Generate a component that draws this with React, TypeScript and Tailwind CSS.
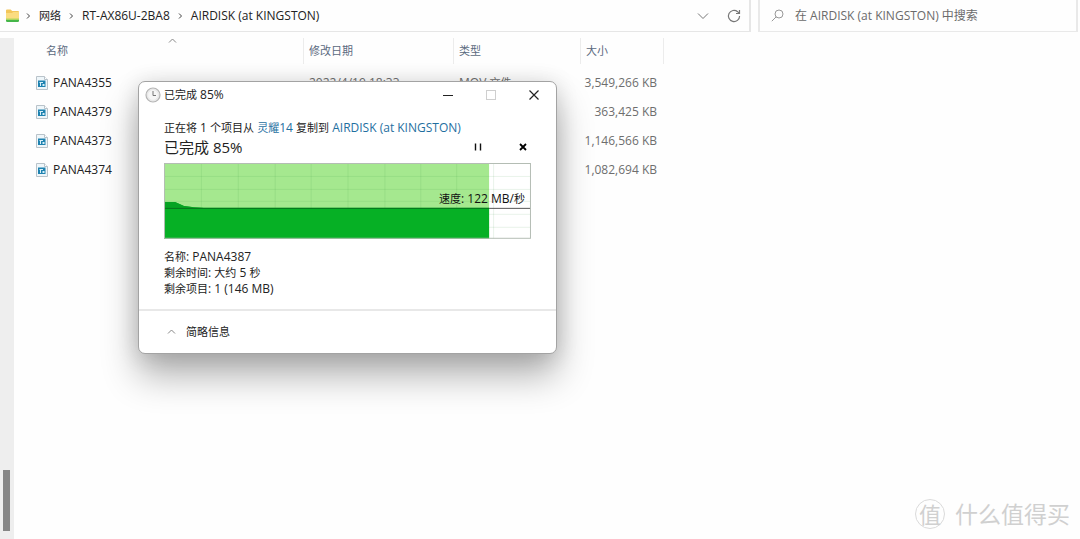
import { useState } from "react";
import type { ReactNode } from "react";

type FileRow = {
	name: string;
	date?: string;
	type?: ReactNode;
	size: string;
};

// Chinese glyphs are set one size below the latin text around them
const Zh = ({ children }: { children: ReactNode }) => (
	<span className="text-[11px]">{children}</span>
);

const files: FileRow[] = [
	{
		name: "PANA4355",
		date: "2022/4/19 18:33",
		type: (
			<>
				MOV <Zh>文件</Zh>
			</>
		),
		size: "3,549,266 KB",
	},
	{ name: "PANA4379", size: "363,425 KB" },
	{ name: "PANA4373", size: "1,146,566 KB" },
	{ name: "PANA4374", size: "1,082,694 KB" },
];

const FolderIcon = () => (
	<svg width="16" height="16" viewBox="0 0 16 16" className="shrink-0">
		<path d="M1 2.500q0-1 1-1h3.600l1.600 1.600H13q1 0 1 1V12H1z" fill="#f3c65a" />
		<path d="M1 5h6l1.200-1H14v8H1z" fill="#fbdc80" />
		<path d="M1 11.500h13v1.200q0 1.300-1.300 1.300H2.300Q1 14 1 12.700z" fill="#45b649" />
		<path d="M1 10.500h13v1.200H1z" fill="#b5d95c" />
	</svg>
);

const VideoFileIcon = () => (
	<svg width="12" height="14" viewBox="0 0 12 14" className="shrink-0">
		<path d="M.5.5h8l3 3v10H.5z" fill="#eef6fa" stroke="#b9c3ca" />
		<path d="M8.500.5v3h3" fill="#fff" stroke="#b9c3ca" />
		<rect x="2" y="4.500" width="7.500" height="6.500" fill="#1e82b0" />
		<path d="M3.500 6h3.500v1H5v3H4V7h-.5zM6.500 8H8.500v2H6.500z" fill="#d8eff8" />
	</svg>
);

const ClockIcon = () => (
	<svg width="16" height="16" viewBox="0 0 16 16" className="shrink-0">
		<circle cx="8" cy="8" r="7" fill="#ececec" stroke="#b4b4b4" strokeWidth="1.200" />
		<circle cx="8" cy="8" r="5.400" fill="#f6f6f6" stroke="#e0e0e0" strokeWidth=".6" />
		<path d="M8 4v4.500h3" fill="none" stroke="#777" />
	</svg>
);

const Chevron = () => (
	<svg width="5" height="8" viewBox="0 0 5 8" fill="none" stroke="#444" className="shrink-0">
		<path d="M1 1.500l2.500 2.500L1 6.500" />
	</svg>
);

const CaretUp = ({ className = "" }: { className?: string }) => (
	<svg
		width="9"
		height="6"
		viewBox="0 0 9 6"
		fill="none"
		stroke="#888"
		className={className}
	>
		<path d="M1 4.500l3.500-3.500L8 4.500" />
	</svg>
);

const AddressBar = () => (
	<header className="flex h-8 gap-[7px] pr-[2px]">
		<div className="flex min-w-0 flex-1 items-center border-r-2 border-b border-[#e6e6e6] pr-[6px] pl-[5px]">
			<FolderIcon />
			<nav
				aria-label="路径"
				className="ml-[5px] flex items-center gap-[8px] whitespace-nowrap text-[#222]"
			>
				<Chevron />
				<a href="#network">
					<Zh>网络</Zh>
				</a>
				<Chevron />
				<a href="#router">RT-AX86U-2BA8</a>
				<Chevron />
				<a href="#airdisk">AIRDISK (at KINGSTON)</a>
			</nav>
			<button type="button" aria-label="历史记录" className="ml-auto p-1">
				<svg width="12" height="8" viewBox="0 0 12 8" fill="none" stroke="#777">
					<path d="M1 1.500l5 5 5-5" />
				</svg>
			</button>
			<button type="button" aria-label="刷新" className="ml-[12px] p-[2px]">
				<svg
					width="14"
					height="14"
					viewBox="0 0 14 14"
					fill="none"
					stroke="#777"
					strokeWidth="1.200"
				>
					<path d="M12.600 7A5.600 5.600 0 1 1 10.600 2.700L12.300 4.400" />
					<path d="M12.500 1v3.500H9" />
				</svg>
			</button>
		</div>
		<label className="flex w-80 items-center gap-[11px] border-x-2 border-b border-[#e9e9e9] px-[11px]">
			<svg
				width="13"
				height="13"
				viewBox="0 0 13 13"
				fill="none"
				stroke="#999"
				className="shrink-0"
			>
				<circle cx="8" cy="5" r="4" />
				<path d="M5.200 7.800L.8 12.200" />
			</svg>
			<input
				type="search"
				aria-label="搜索"
				placeholder="在 AIRDISK (at KINGSTON) 中搜索"
				className="min-w-0 flex-1 bg-transparent outline-none placeholder:text-[#6b6b6b]"
			/>
		</label>
	</header>
);

const FileTable = () => (
	<table className="ml-[18px] w-[632px] table-fixed self-start">
		<thead className="text-[11px] text-[#5b6a80]">
			<tr className="h-[30px] text-left align-top">
				<th className="relative w-[272px] p-0 font-normal">
					<CaretUp className="absolute top-0 left-[136px]" />
					<div className="h-[26px] border-r border-[#ececec] pl-[14px] leading-[26px]">名称</div>
				</th>
				<th className="w-[150px] p-0 font-normal">
					<div className="h-[26px] border-r border-[#ececec] pl-[5px] leading-[26px]">
						修改日期
					</div>
				</th>
				<th className="w-[127px] p-0 font-normal">
					<div className="h-[26px] border-r border-[#ececec] pl-[5px] leading-[26px]">类型</div>
				</th>
				<th className="p-0 font-normal">
					<div className="h-[26px] border-r border-[#ececec] pl-[5px] leading-[26px]">大小</div>
				</th>
			</tr>
		</thead>
		<tbody>
			{files.map((f) => (
				<tr key={f.name} className="h-[29px] whitespace-nowrap text-[#6e6e6e]">
					<td className="p-0 pl-[4px]">
						<div className="flex items-center gap-[5px] text-[#222]">
							<VideoFileIcon />
							{f.name}
						</div>
					</td>
					<td className="p-0 pl-[5px]">{f.date}</td>
					<td className="p-0 pl-[5px]">{f.type}</td>
					<td className="p-0 pr-[7px] text-right">{f.size}</td>
				</tr>
			))}
		</tbody>
	</table>
);

const SpeedChart = () => (
	<div className="relative mt-[5px]">
		<svg viewBox="0 0 368 76" className="block w-full">
			<rect width="368" height="76" fill="#fff" />
			<rect width="326" height="76" fill="#a5e88f" />
			{/* grid */}
			<g stroke="#2b8a3a" strokeOpacity=".11">
				{[13, 26, 38, 51, 64].map((y) => (
					<path key={y} d={`M0 ${y + 0.5}H368`} />
				))}
				{[37, 74, 111, 147, 184, 221, 257, 293, 330].map((x) => (
					<path key={x} d={`M${x + 0.5} 0V76`} />
				))}
			</g>
			<path d="M0 39H11L20 43L30 44.500L40 45H326V76H0z" fill="#06b025" />
			<path d="M0 39H11L20 43L30 44.500L40 45H0z" fill="#06a323" />
			<path d="M0 45.500H326" stroke="#08701c" />
			<path d="M326 45.500H368" stroke="#555" />
			<rect x=".5" y=".5" width="367" height="75" fill="none" stroke="#b4bdb4" />
		</svg>
		<div className="absolute top-[28px] right-[6px] text-[#111]">
			<Zh>速度</Zh>: 122 MB/<Zh>秒</Zh>
		</div>
	</div>
);

const CopyDialog = () => {
	const [paused, setPaused] = useState(false);

	return (
		<section
			role="dialog"
			aria-label="已完成 85%"
			className="absolute top-[81px] left-[138px] w-[419px] rounded-[7px] border border-[#a3a3a3] bg-white text-[#222] shadow-[0_22px_36px_rgba(0,0,0,0.3),0_2px_22px_rgba(0,0,0,0.14)]"
		>
			<div className="flex h-[25px] items-center pr-[1px] pl-[6px]">
				<ClockIcon />
				<span className="ml-[3px]">
					<Zh>已完成</Zh> 85%
				</span>
				<button
					type="button"
					aria-label="最小化"
					className="ml-auto flex h-full w-[43px] items-center justify-center"
				>
					<svg width="10" height="10" stroke="#222">
						<path d="M0 5.500h10" />
					</svg>
				</button>
				<button
					type="button"
					aria-label="最大化"
					disabled
					className="flex h-full w-[43px] items-center justify-center"
				>
					<svg width="10" height="10" fill="none" stroke="#cfcfcf">
						<rect x=".5" y=".5" width="9" height="9" />
					</svg>
				</button>
				<button
					type="button"
					aria-label="关闭"
					className="flex h-full w-[43px] items-center justify-center"
				>
					<svg width="10" height="10" stroke="#222" strokeWidth="1.200">
						<path d="M.5.5l9 9M9.500.5l-9 9" />
					</svg>
				</button>
			</div>

			<div className="px-[25px] pt-[13px] pb-[12px]">
				<p className="whitespace-nowrap">
					<Zh>正在将</Zh> 1 <Zh>个项目从</Zh>{" "}
					<a href="#source" className="text-[#1f6f9f]">
						<Zh>灵耀</Zh>14
					</a>{" "}
					<Zh>复制到</Zh>{" "}
					<a href="#airdisk" className="text-[#1f6f9f]">
						AIRDISK (at KINGSTON)
					</a>
				</p>
				<div className="flex h-[22px] items-center">
					<h2 className="text-[15px] leading-5">已完成 85%</h2>
					<button
						type="button"
						aria-label="暂停"
						aria-pressed={paused}
						onClick={() => setPaused(!paused)}
						className="ml-auto flex size-4 items-center justify-center"
					>
						<svg width="8" height="8" fill="#111">
							<path d="M.8 .5h1.400v7H.8zM5.800.5h1.400v7H5.800z" />
						</svg>
					</button>
					<button
						type="button"
						aria-label="取消"
						className="ml-[29px] flex size-4 items-center justify-center"
					>
						<svg width="8" height="8" stroke="#000" strokeWidth="1.800">
							<path d="M1 1l6 6M7 1L1 7" />
						</svg>
					</button>
				</div>
				<SpeedChart />
				<div className="mt-[10px]">
					<p>
						<Zh>名称</Zh>: PANA4387
					</p>
					<p>
						<Zh>剩余时间</Zh>: <Zh>大约</Zh> 5 <Zh>秒</Zh>
					</p>
					<p>
						<Zh>剩余项目</Zh>: 1 (146 MB)
					</p>
				</div>
			</div>

			<div className="flex h-[44px] items-center border-t-2 border-[#e8e8e8] pl-[28px]">
				<button type="button" className="flex items-center gap-[10px] text-[11px]">
					<CaretUp />
					简略信息
				</button>
			</div>
		</section>
	);
};

const Watermark = () => (
	<div className="absolute right-[10px] bottom-[10px] flex items-center gap-[10px] text-[#d0d0d0]">
		<span className="flex size-[30px] items-center justify-center rounded-full border border-[#dadada] text-[22px] leading-[26px]">
			值
		</span>
		<span className="text-[23px] leading-[30px]">什么值得买</span>
	</div>
);

export default function App() {
	return (
		<div className="relative flex min-h-screen flex-col overflow-hidden bg-[#fefefe] font-['Open_Sans','Noto_Sans_CJK_SC',sans-serif] text-[12px] leading-4">
			<AddressBar />
			<main className="mt-[6px] flex flex-1">
				<aside className="flex w-[14px] flex-col justify-end bg-[#eeeeee] pb-[8px] pl-[3px]">
					<div className="h-[61px] w-[7px] bg-[#868686]" />
				</aside>
				<FileTable />
			</main>
			<CopyDialog />
			<Watermark />
		</div>
	);
}
